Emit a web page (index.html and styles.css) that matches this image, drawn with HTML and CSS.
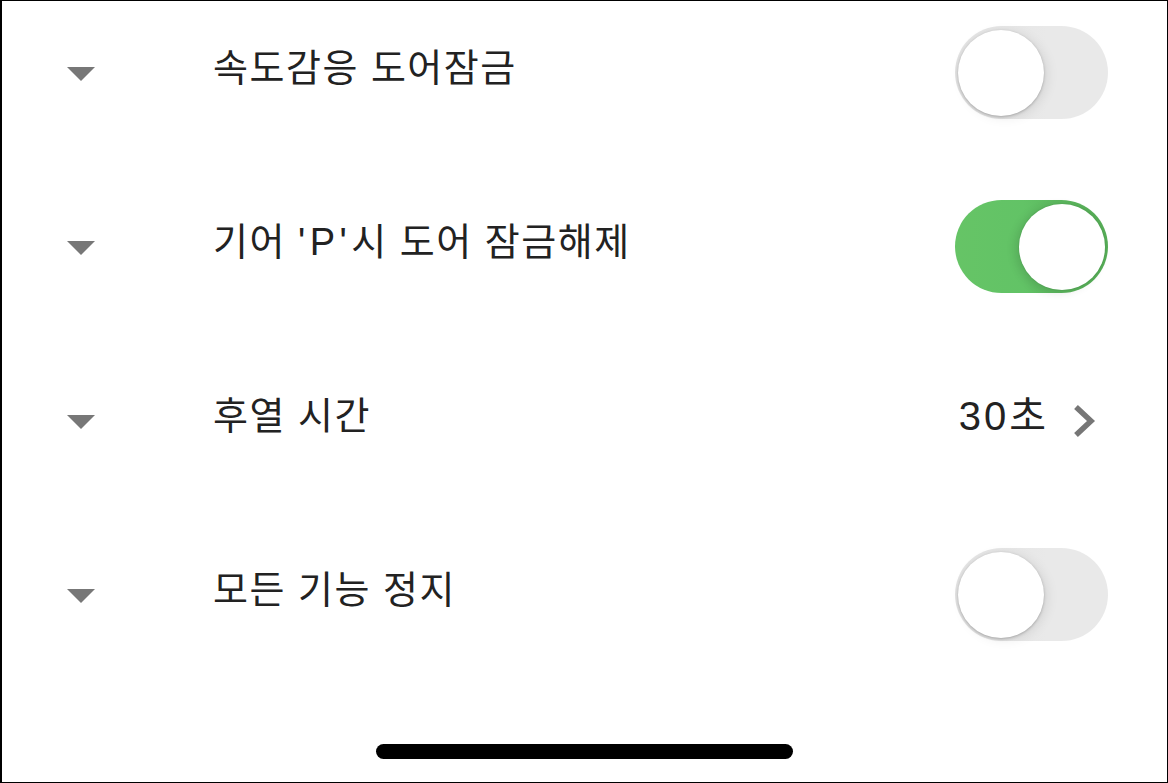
FILE: index.html
```html
<!DOCTYPE html>
<html lang="ko">
<head>
	<meta charset="UTF-8">
	<title>도어 설정</title>
	<link rel="stylesheet" href="styles.css">
</head>
<body>
	<div class="screen">
		<div class="list">
			<div class="row">
				<span class="caret"></span>
				<span class="label">속도감응 도어잠금</span>
				<span class="toggle"><span class="knob"></span></span>
			</div>
			<div class="row">
				<span class="caret"></span>
				<span class="label">기어 <span class="gear">'P'</span>시 도어 잠금해제</span>
				<span class="toggle on"><span class="knob"></span></span>
			</div>
			<div class="row">
				<span class="caret"></span>
				<span class="label">후열 시간</span>
				<span class="value">30초</span>
				<svg class="chevron" width="24" height="34" viewBox="0 0 24 34">
					<polyline points="4,3 19,17 4,31" fill="none" stroke="#767676" stroke-width="5.5"/>
				</svg>
			</div>
			<div class="row">
				<span class="caret"></span>
				<span class="label">모든 기능 정지</span>
				<span class="toggle"><span class="knob"></span></span>
			</div>
		</div>
		<div class="home"></div>
	</div>
</body>
</html>
```

FILE: styles.css
```css
html, body {
	margin: 0;
	background: #fff;
}
.screen {
	box-sizing: border-box;
	width: 1168px;
	height: 783px;
	border: 1px solid #000;
	border-left-width: 2px;
	display: flex;
	flex-direction: column;
	font-family: "Liberation Sans", "Noto Sans CJK KR", sans-serif;
	color: #222;
}
.list {
	display: flex;
	flex-direction: column;
	gap: 81px;
	padding: 25px 59px 0 65px;
}
.row {
	display: flex;
	align-items: center;
	height: 93px;
}
.caret {
	width: 0;
	height: 0;
	border-left: 14.5px solid transparent;
	border-right: 14.5px solid transparent;
	border-top: 14px solid #777;
	margin-right: 118px;
	margin-top: 2px;
}
.label {
	flex: 1;
	font-size: 38px;
	letter-spacing: 1.5px;
	line-height: 1;
	margin-top: -9px;
}
.label .gear {
	letter-spacing: 4.5px;
}
.value {
	font-size: 40px;
	letter-spacing: 3px;
	line-height: 1;
	margin-top: -9px;
	margin-right: 23px;
}
.chevron {
	margin-right: 12px;
	margin-top: 1px;
}
.toggle {
	position: relative;
	box-sizing: border-box;
	width: 153px;
	height: 93px;
	border-radius: 47px;
	background: linear-gradient(90deg, #e2e2e2 0%, #e9e9e9 60%);
}
.toggle .knob {
	position: absolute;
	top: 4px;
	left: 3px;
	width: 86px;
	height: 86px;
	border-radius: 50%;
	background: #fff;
	box-shadow: 0 1px 3px rgba(0, 0, 0, .25), 4px 2px 12px rgba(0, 0, 0, .08);
}
.toggle.on {
	background: linear-gradient(90deg, #66c466 0%, #62c366 45%, #56ad57 90%);
}
.toggle.on .knob {
	left: 64px;
	box-shadow: 0 0 0 1px rgba(0, 0, 0, .04), -4px 2px 10px rgba(0, 0, 0, .12);
}
.home {
	margin: auto auto 23px;
	width: 417px;
	height: 15px;
	border-radius: 8px;
	background: #000;
}
```
